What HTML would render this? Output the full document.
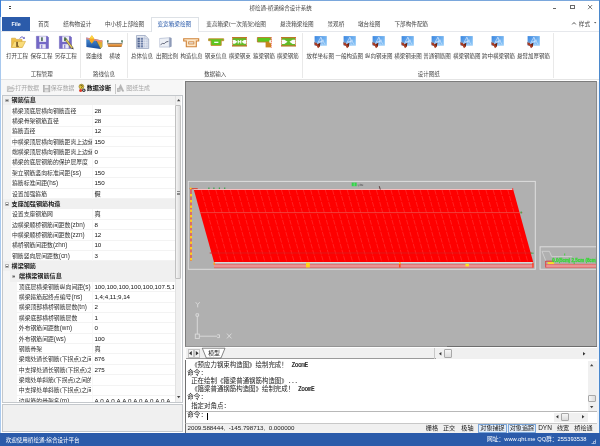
<!DOCTYPE html><html lang="zh-CN"><head><meta charset="utf-8"><title>桥绘通-桥涵综合设计系统</title><style>
html,body{margin:0;padding:0;}
body{width:600px;height:446px;position:relative;overflow:hidden;background:#fff;font-family:"Liberation Sans","Noto Sans CJK SC",sans-serif;}
.b{position:absolute;box-sizing:border-box;}
.t{position:absolute;white-space:nowrap;line-height:10px;height:10px;color:#333;}
#w{position:absolute;left:0;top:0;width:600px;height:446px;overflow:hidden;will-change:transform;}
.m{font-family:"Liberation Mono","Noto Sans CJK SC",monospace;}
svg{position:absolute;overflow:visible;}
</style></head><body><div id="w">
<div class="b" style="left:0px;top:0px;width:600px;height:1px;background:#7aa7dc;"></div>
<div class="b" style="left:0px;top:0px;width:1px;height:446px;background:#a9c9ee;"></div>
<div class="b" style="left:0px;top:0px;width:1px;height:17px;background:#3d7fd6;"></div>
<div class="b" style="left:598.5px;top:0px;width:1.5px;height:446px;background:#4b88cc;"></div>
<div class="b" style="left:597px;top:82px;width:1.5px;height:351px;background:#eef2f8;"></div>
<span class="t" style="left:280.7px;top:3.30px;font-size:5.5px;color:#444;transform:translateX(-50%);">桥绘通-桥涵综合设计系统</span>
<div class="b" style="left:9px;top:6.2px;width:2.2px;height:0.8px;background:#444;"></div>
<div class="b" style="left:9.3px;top:7.6px;width:1.6px;height:1.4px;background:#444;"></div>
<div class="b" style="left:553.4px;top:7.7px;width:3px;height:0.9px;background:#666;"></div>
<div class="b" style="left:570px;top:4.6px;width:4.8px;height:4.6px;border:0.7px solid #6a6a6a;border-top:1.4px solid #6a6a6a;"></div>
<svg style="left:587.6px;top:5px" width="4.2" height="4.2" viewBox="0 0 4.2 4.2"><path d="M0 0L4.2 4.2M4.2 0L0 4.2" stroke="#555" stroke-width="0.8" fill="none"/></svg>
<div class="b" style="left:2px;top:17px;width:28px;height:14.3px;background:#2b5baa;"></div>
<span class="t" style="left:16.1px;top:19.20px;font-size:5.4px;color:#f4f7fc;transform:translateX(-50%);font-weight:bold;">File</span>
<span class="t" style="left:38px;top:19.20px;font-size:5.6px;color:#444;">首页</span>
<span class="t" style="left:63.3px;top:19.20px;font-size:5.6px;color:#444;">结构物设计</span>
<span class="t" style="left:105px;top:19.20px;font-size:5.6px;color:#444;">中小桥上部绘图</span>
<span class="t" style="left:206.3px;top:19.20px;font-size:5.6px;color:#444;">变高箱梁(一次落架)绘图</span>
<span class="t" style="left:280px;top:19.20px;font-size:5.6px;color:#444;">悬浇箱梁绘图</span>
<span class="t" style="left:327.5px;top:19.20px;font-size:5.6px;color:#444;">景观桥</span>
<span class="t" style="left:358px;top:19.20px;font-size:5.6px;color:#444;">墩台绘图</span>
<span class="t" style="left:394.5px;top:19.20px;font-size:5.6px;color:#444;">下部构件配筋</span>
<div class="b" style="left:1px;top:31px;width:597.5px;height:48.5px;background:#fff;border-top:1px solid #e6e8ec;border-bottom:1px solid #e4e4e4;"></div>
<div class="b" style="left:151.3px;top:16.5px;width:47.5px;height:15.5px;background:#fff;border:1px solid #dde1e6;border-bottom:none;"></div>
<span class="t" style="left:157.5px;top:19.20px;font-size:5.6px;color:#2b5baa;">变宽箱梁绘图</span>
<svg style="left:572px;top:22.3px" width="4" height="2.6" viewBox="0 0 4 2.6"><path d="M0.2 2.4L2 0.5L3.8 2.4" stroke="#444" stroke-width="0.9" fill="none"/></svg>
<span class="t" style="left:578.8px;top:19.20px;font-size:5.6px;color:#444;">样式</span>
<svg style="left:593.8px;top:22px" width="2.4" height="1.6" viewBox="0 0 2.4 1.6"><path d="M0 0H2.4L1.2 1.6Z" fill="#555"/></svg>
<div class="b" style="left:80.3px;top:32.5px;width:0.8px;height:45.5px;background:#e9e9e9;"></div>
<div class="b" style="left:127.1px;top:32.5px;width:0.8px;height:45.5px;background:#e9e9e9;"></div>
<div class="b" style="left:302.1px;top:32.5px;width:0.8px;height:45.5px;background:#e9e9e9;"></div>
<div class="b" style="left:553.0px;top:32.5px;width:0.8px;height:45.5px;background:#e9e9e9;"></div>
<span class="t" style="left:17.0px;top:51.20px;font-size:5.5px;color:#444;transform:translateX(-50%);">打开工程</span>
<span class="t" style="left:41.625px;top:51.20px;font-size:5.5px;color:#444;transform:translateX(-50%);">保存工程</span>
<span class="t" style="left:65.875px;top:51.20px;font-size:5.5px;color:#444;transform:translateX(-50%);">另存工程</span>
<span class="t" style="left:94.125px;top:51.20px;font-size:5.5px;color:#444;transform:translateX(-50%);">竖曲线</span>
<span class="t" style="left:114.75px;top:51.20px;font-size:5.5px;color:#444;transform:translateX(-50%);">横坡</span>
<span class="t" style="left:142.0px;top:51.20px;font-size:5.5px;color:#444;transform:translateX(-50%);">总体信息</span>
<span class="t" style="left:167.0px;top:51.20px;font-size:5.5px;color:#444;transform:translateX(-50%);">出图比例</span>
<span class="t" style="left:191.625px;top:51.20px;font-size:5.5px;color:#444;transform:translateX(-50%);">构造信息</span>
<span class="t" style="left:215.875px;top:51.20px;font-size:5.5px;color:#444;transform:translateX(-50%);">钢束信息</span>
<span class="t" style="left:239.75px;top:51.20px;font-size:5.5px;color:#444;transform:translateX(-50%);">横梁钢束</span>
<span class="t" style="left:264.125px;top:51.20px;font-size:5.5px;color:#444;transform:translateX(-50%);">箍梁钢筋</span>
<span class="t" style="left:287.75px;top:51.20px;font-size:5.5px;color:#444;transform:translateX(-50%);">横梁钢筋</span>
<span class="t" style="left:320.375px;top:51.20px;font-size:5.5px;color:#444;transform:translateX(-50%);">放样坐标图</span>
<span class="t" style="left:349.375px;top:51.20px;font-size:5.5px;color:#444;transform:translateX(-50%);">一般构造图</span>
<span class="t" style="left:378.75px;top:51.20px;font-size:5.5px;color:#444;transform:translateX(-50%);">纵向钢束图</span>
<span class="t" style="left:408.125px;top:51.20px;font-size:5.5px;color:#444;transform:translateX(-50%);">横梁钢束图</span>
<span class="t" style="left:437.125px;top:51.20px;font-size:5.5px;color:#444;transform:translateX(-50%);">普通钢筋图</span>
<span class="t" style="left:466.875px;top:51.20px;font-size:5.5px;color:#444;transform:translateX(-50%);">横梁钢筋图</span>
<span class="t" style="left:498.5px;top:51.20px;font-size:5.5px;color:#444;transform:translateX(-50%);">跨中横梁钢筋</span>
<span class="t" style="left:533.5px;top:51.20px;font-size:5.5px;color:#444;transform:translateX(-50%);">悬臂加厚钢筋</span>
<span class="t" style="left:41.875px;top:68.80px;font-size:5.5px;color:#444;transform:translateX(-50%);">工程管理</span>
<span class="t" style="left:104.125px;top:68.80px;font-size:5.5px;color:#444;transform:translateX(-50%);">路线信息</span>
<span class="t" style="left:215.375px;top:68.80px;font-size:5.5px;color:#444;transform:translateX(-50%);">数据输入</span>
<span class="t" style="left:428.75px;top:68.80px;font-size:5.5px;color:#444;transform:translateX(-50%);">设计图纸</span>
<svg style="left:10.6px;top:36.2px" width="15" height="12" viewBox="0 0 15 12"><path d="M0.6 2.2H4.4L5.4 3.4H11V11.2H0.6Z" fill="#efc24a" stroke="#cf9f34" stroke-width="0.6"/><path d="M0.4 11.4L3.2 5.4H14.5L11.4 11.4Z" fill="#f9dc7a" stroke="#d6a838" stroke-width="0.6"/><rect x="5.3" y="5.9" width="1.5" height="5" fill="#6a4a1a"/><path d="M6.6 9.8h1.2v1.2h-1.2z" fill="#8a6a2a"/><path d="M8.8 2.6C9.6 0.6 11.8 0.4 12.8 2" stroke="#5c54b8" stroke-width="0.9" fill="none"/><path d="M11.6 2.4L13.8 3L13.6 0.8Z" fill="#5c54b8"/></svg>
<svg style="left:36px;top:36px" width="13" height="13.2" viewBox="0 0 13 13.2"><path d="M0.4 0.3H11.4L12.5 1.4V12.5H0.4Z" fill="#7468c6" stroke="#6a5eb8" stroke-width="0.5"/><rect x="3.2" y="0.3" width="6.9" height="5.6" fill="#eef0f8"/><rect x="5.2" y="1.3" width="1.5" height="3.8" fill="#3d5c4c"/><rect x="3.6" y="8.2" width="6.1" height="4.3" fill="#e9e9f5"/><rect x="5.2" y="8.8" width="1.1" height="3.6" fill="#7a6ecb"/></svg>
<svg style="left:59.2px;top:36px" width="16" height="14" viewBox="0 0 16 14"><path d="M0.4 0.3H11.4L12.5 1.4V12.5H0.4Z" fill="#7468c6" stroke="#6a5eb8" stroke-width="0.5"/><rect x="3.2" y="0.3" width="6.9" height="5.6" fill="#eef0f8"/><rect x="5.2" y="1.3" width="1.5" height="3.8" fill="#3d5c4c"/><rect x="3.6" y="8.2" width="6.1" height="4.3" fill="#e9e9f5"/><rect x="5.2" y="8.8" width="1.1" height="3.6" fill="#7a6ecb"/><path d="M5.4 3.2L7 2.2L14 11.6L12.6 12.6Z" fill="#e8d060" stroke="#6a5a30" stroke-width="0.6"/><path d="M5.4 3.2L7 2.2L7.8 3.4L6.2 4.4Z" fill="#3a7a4a"/><path d="M12.6 12.6L14 11.6L14.8 13.6Z" fill="#333"/></svg>
<svg style="left:86px;top:34.6px" width="17" height="14.4" viewBox="0 0 17 14.4"><defs><linearGradient id="vc" x1="0" y1="0" x2="0" y2="1"><stop offset="0" stop-color="#4f97dc"/><stop offset="1" stop-color="#174a9a"/></linearGradient><linearGradient id="vo" x1="0" y1="0" x2="0" y2="1"><stop offset="0" stop-color="#e89a2a"/><stop offset="1" stop-color="#d8c040"/></linearGradient></defs><path d="M0.2 2.4L16.3 5.4V11.4L14.4 13.9L0.4 12Z" fill="url(#vc)"/><path d="M9.6 4.6L16.3 5.4V11.6L14.6 13.8Z" fill="url(#vo)"/><path d="M9.4 4.4L14.6 13.8" stroke="#4a5a6a" stroke-width="0.6"/><path d="M0.2 2.4L16.3 5.4V7L0.2 4.2Z" fill="#f28a86" opacity="0.9"/><path d="M5.9 0.2L8.4 3.8L7.6 6.2L5.8 8.8L3.9 6.2L3.2 3.6Z" fill="#f6a81e"/><path d="M5.9 0.2L8 3.4H3.6Z" fill="#fbd84a"/></svg>
<svg style="left:107.2px;top:39.6px" width="16" height="7" viewBox="0 0 16 7"><rect x="0.1" y="0.2" width="1.4" height="2.5" fill="#3a6a4a"/><rect x="14.3" y="0.2" width="1.4" height="2.5" fill="#3a6a4a"/><rect x="0.8" y="2.5" width="14.2" height="0.9" fill="#e2ebea"/><rect x="0.3" y="3.4" width="15.2" height="0.8" fill="#5a3a1a"/><path d="M0.4 4.2H15.4L14.6 6.3H1.2Z" fill="#e28c30"/><path d="M1.1 6.1H14.7L14.5 6.8H1.3Z" fill="#9c5616"/></svg>
<svg style="left:135.8px;top:35px" width="13.2" height="14" viewBox="0 0 13.2 14"><path d="M0.5 0.5H9L12.7 4.2V13.5H0.5Z" fill="#e3e8f1" stroke="#9aa6c0" stroke-width="0.8"/><path d="M9 0.5V4.2H12.7Z" fill="#fafbfd" stroke="#9aa6c0" stroke-width="0.6"/><rect x="1.5" y="2.8" width="10.2" height="9.6" fill="#c4cde0"/><rect x="1.5" y="2.8" width="2.5" height="9.6" fill="#4f6390"/><rect x="4.5" y="2.8" width="2.8" height="9.6" fill="#6e80a8"/><path d="M1.5 5.1H11.7M1.5 7.5H11.7M1.5 9.9H11.7M4.25 2.8V12.4M7.5 2.8V12.4M9.7 4.4V12.4" stroke="#eef1f7" stroke-width="0.55"/></svg>
<svg style="left:159.2px;top:37.2px" width="12.8" height="10.8" viewBox="0 0 12.8 10.8"><path d="M0.3 1.1L10.4 0.2L12.5 1V9.4L10.4 10.5H0.3Z" fill="#c3cbdc"/><path d="M10.4 0.2L12.5 1V9.4L10.4 10.5Z" fill="#8e9bb8"/><path d="M1 2L9.8 1.3V9.6H1Z" fill="#edf0f6"/><path d="M1.5 7.8L3.6 6.4L5.2 6.7L7 5L9.4 4.4" stroke="#454a60" stroke-width="0.8" fill="none"/></svg>
<svg style="left:182.8px;top:37.8px" width="16.4" height="9.6" viewBox="0 0 16.4 9.6"><path d="M0.7 0.8H15.7V3H13.3V8.7H3.3V3H0.7Z" fill="#fde9cb" stroke="#cf8238" stroke-width="1.1"/><rect x="5.7" y="3.8" width="5.2" height="2.2" fill="#e8e4e0" stroke="#cf8238" stroke-width="0.8"/></svg>
<svg style="left:207.6px;top:38.2px" width="16.4" height="8.4" viewBox="0 0 16.4 8.4"><path d="M0.6 0.8H15.7V2.7H13.2V7.4H3V2.7H0.6Z" fill="#5cc620" stroke="#c98a30" stroke-width="0.9"/><rect x="6.2" y="3.7" width="4.2" height="1.3" fill="#f4fff0"/></svg>
<svg style="left:232.2px;top:37.4px" width="15" height="9.6" viewBox="0 0 15 9.6"><rect x="0.5" y="0.5" width="14" height="8.6" fill="#62bc26"/><path d="M0 0.7H15M0 8.9H15" stroke="#b87a28" stroke-width="1.3"/><path d="M0.5 0V9.6M14.5 0V9.6" stroke="#f0503c" stroke-width="0.7" stroke-dasharray="1.3 0.6"/><path d="M0.8 2.9H3L5.4 4.8L3 6.7H0.8Z M14.2 2.9H12L9.6 4.8L12 6.7H14.2Z" fill="#fbfdf8"/><path d="M6.2 3V6.6M8.8 3V6.6M6.2 4.8H8.8" stroke="#fff" stroke-width="1.1"/></svg>
<svg style="left:256.6px;top:37.2px" width="15" height="11" viewBox="0 0 15 11"><path d="M0.4 0.5H13.8V5H0.4Z" fill="#62c024" stroke="#b87a28" stroke-width="0.9"/><rect x="8.6" y="4.6" width="5.4" height="5.8" fill="#c8841e"/><rect x="1" y="1.1" width="11.4" height="3.2" fill="#5cc81e"/><ellipse cx="13.2" cy="4.6" rx="0.9" ry="1.8" fill="#f8fbf4"/><path d="M14.4 0V10.8" stroke="#f0503c" stroke-width="0.7" stroke-dasharray="1.3 0.6"/></svg>
<svg style="left:280.6px;top:37.4px" width="15" height="9.6" viewBox="0 0 15 9.6"><rect x="0.5" y="0.5" width="14" height="8.6" fill="#62bc26"/><path d="M0 0.7H15M0 8.9H15" stroke="#b87a28" stroke-width="1.3"/><path d="M0.5 0V9.6M14.5 0V9.6" stroke="#f0503c" stroke-width="0.7" stroke-dasharray="1.3 0.6"/><path d="M0.8 2.7H3.4L6.6 4.8L3.4 6.9H0.8Z M14.2 2.7H11.6L8.4 4.8L11.6 6.9H14.2Z" fill="#fbfdf8"/></svg>
<svg style="left:313.8px;top:36.4px" width="13" height="12.4" viewBox="0 0 13 12.4"><defs><linearGradient id="dg313" x1="0" y1="0" x2="1" y2="0.6"><stop offset="0" stop-color="#3a86e0"/><stop offset="1" stop-color="#86c2f6"/></linearGradient></defs><rect x="0.6" y="0.1" width="12.2" height="9.5" fill="url(#dg313)"/><path d="M0.6 9.1H12.8" stroke="#b8dcfa" stroke-width="0.8"/><path d="M2.8 8.6L6.8 1.2L10.8 8.2M4.4 5.8H9.6M6.8 1.2L8.2 8.8M3.6 7.4L10 4" stroke="#e4f0ff" stroke-width="0.65" fill="none" opacity="0.8"/><path d="M0.2 6.2L2.2 6.6L3.8 8.2L6.2 7L5.8 10.8L4 12.2L2.8 10L0.6 9Z" fill="#a83c24"/><path d="M0.2 6.4L1.8 5L3 7Z" fill="#8496b2"/><path d="M3.8 8.2L6.2 7L5.8 10.8Z" fill="#6a2414"/></svg>
<svg style="left:342.6px;top:36.4px" width="13" height="12.4" viewBox="0 0 13 12.4"><defs><linearGradient id="dg342" x1="0" y1="0" x2="1" y2="0.6"><stop offset="0" stop-color="#3a86e0"/><stop offset="1" stop-color="#86c2f6"/></linearGradient></defs><rect x="0.6" y="0.1" width="12.2" height="9.5" fill="url(#dg342)"/><path d="M0.6 9.1H12.8" stroke="#b8dcfa" stroke-width="0.8"/><path d="M2.8 8.6L6.8 1.2L10.8 8.2M4.4 5.8H9.6M6.8 1.2L8.2 8.8M3.6 7.4L10 4" stroke="#e4f0ff" stroke-width="0.65" fill="none" opacity="0.8"/><path d="M0.2 6.2L2.2 6.6L3.8 8.2L6.2 7L5.8 10.8L4 12.2L2.8 10L0.6 9Z" fill="#a83c24"/><path d="M0.2 6.4L1.8 5L3 7Z" fill="#8496b2"/><path d="M3.8 8.2L6.2 7L5.8 10.8Z" fill="#6a2414"/></svg>
<svg style="left:372px;top:36.4px" width="13" height="12.4" viewBox="0 0 13 12.4"><defs><linearGradient id="dg372" x1="0" y1="0" x2="1" y2="0.6"><stop offset="0" stop-color="#3a86e0"/><stop offset="1" stop-color="#86c2f6"/></linearGradient></defs><rect x="0.6" y="0.1" width="12.2" height="9.5" fill="url(#dg372)"/><path d="M0.6 9.1H12.8" stroke="#b8dcfa" stroke-width="0.8"/><path d="M2.8 8.6L6.8 1.2L10.8 8.2M4.4 5.8H9.6M6.8 1.2L8.2 8.8M3.6 7.4L10 4" stroke="#e4f0ff" stroke-width="0.65" fill="none" opacity="0.8"/><path d="M0.2 6.2L2.2 6.6L3.8 8.2L6.2 7L5.8 10.8L4 12.2L2.8 10L0.6 9Z" fill="#a83c24"/><path d="M0.2 6.4L1.8 5L3 7Z" fill="#8496b2"/><path d="M3.8 8.2L6.2 7L5.8 10.8Z" fill="#6a2414"/></svg>
<svg style="left:401.3px;top:36.4px" width="13" height="12.4" viewBox="0 0 13 12.4"><defs><linearGradient id="dg401" x1="0" y1="0" x2="1" y2="0.6"><stop offset="0" stop-color="#3a86e0"/><stop offset="1" stop-color="#86c2f6"/></linearGradient></defs><rect x="0.6" y="0.1" width="12.2" height="9.5" fill="url(#dg401)"/><path d="M0.6 9.1H12.8" stroke="#b8dcfa" stroke-width="0.8"/><path d="M2.8 8.6L6.8 1.2L10.8 8.2M4.4 5.8H9.6M6.8 1.2L8.2 8.8M3.6 7.4L10 4" stroke="#e4f0ff" stroke-width="0.65" fill="none" opacity="0.8"/><path d="M0.2 6.2L2.2 6.6L3.8 8.2L6.2 7L5.8 10.8L4 12.2L2.8 10L0.6 9Z" fill="#a83c24"/><path d="M0.2 6.4L1.8 5L3 7Z" fill="#8496b2"/><path d="M3.8 8.2L6.2 7L5.8 10.8Z" fill="#6a2414"/></svg>
<svg style="left:430.8px;top:36.4px" width="13" height="12.4" viewBox="0 0 13 12.4"><defs><linearGradient id="dg430" x1="0" y1="0" x2="1" y2="0.6"><stop offset="0" stop-color="#3a86e0"/><stop offset="1" stop-color="#86c2f6"/></linearGradient></defs><rect x="0.6" y="0.1" width="12.2" height="9.5" fill="url(#dg430)"/><path d="M0.6 9.1H12.8" stroke="#b8dcfa" stroke-width="0.8"/><path d="M2.8 8.6L6.8 1.2L10.8 8.2M4.4 5.8H9.6M6.8 1.2L8.2 8.8M3.6 7.4L10 4" stroke="#e4f0ff" stroke-width="0.65" fill="none" opacity="0.8"/><path d="M0.2 6.2L2.2 6.6L3.8 8.2L6.2 7L5.8 10.8L4 12.2L2.8 10L0.6 9Z" fill="#a83c24"/><path d="M0.2 6.4L1.8 5L3 7Z" fill="#8496b2"/><path d="M3.8 8.2L6.2 7L5.8 10.8Z" fill="#6a2414"/></svg>
<svg style="left:459.6px;top:36.4px" width="13" height="12.4" viewBox="0 0 13 12.4"><defs><linearGradient id="dg459" x1="0" y1="0" x2="1" y2="0.6"><stop offset="0" stop-color="#3a86e0"/><stop offset="1" stop-color="#86c2f6"/></linearGradient></defs><rect x="0.6" y="0.1" width="12.2" height="9.5" fill="url(#dg459)"/><path d="M0.6 9.1H12.8" stroke="#b8dcfa" stroke-width="0.8"/><path d="M2.8 8.6L6.8 1.2L10.8 8.2M4.4 5.8H9.6M6.8 1.2L8.2 8.8M3.6 7.4L10 4" stroke="#e4f0ff" stroke-width="0.65" fill="none" opacity="0.8"/><path d="M0.2 6.2L2.2 6.6L3.8 8.2L6.2 7L5.8 10.8L4 12.2L2.8 10L0.6 9Z" fill="#a83c24"/><path d="M0.2 6.4L1.8 5L3 7Z" fill="#8496b2"/><path d="M3.8 8.2L6.2 7L5.8 10.8Z" fill="#6a2414"/></svg>
<svg style="left:491.3px;top:36.4px" width="13" height="12.4" viewBox="0 0 13 12.4"><defs><linearGradient id="dg491" x1="0" y1="0" x2="1" y2="0.6"><stop offset="0" stop-color="#3a86e0"/><stop offset="1" stop-color="#86c2f6"/></linearGradient></defs><rect x="0.6" y="0.1" width="12.2" height="9.5" fill="url(#dg491)"/><path d="M0.6 9.1H12.8" stroke="#b8dcfa" stroke-width="0.8"/><path d="M2.8 8.6L6.8 1.2L10.8 8.2M4.4 5.8H9.6M6.8 1.2L8.2 8.8M3.6 7.4L10 4" stroke="#e4f0ff" stroke-width="0.65" fill="none" opacity="0.8"/><path d="M0.2 6.2L2.2 6.6L3.8 8.2L6.2 7L5.8 10.8L4 12.2L2.8 10L0.6 9Z" fill="#a83c24"/><path d="M0.2 6.4L1.8 5L3 7Z" fill="#8496b2"/><path d="M3.8 8.2L6.2 7L5.8 10.8Z" fill="#6a2414"/></svg>
<svg style="left:527px;top:36.4px" width="13" height="12.4" viewBox="0 0 13 12.4"><defs><linearGradient id="dg527" x1="0" y1="0" x2="1" y2="0.6"><stop offset="0" stop-color="#3a86e0"/><stop offset="1" stop-color="#86c2f6"/></linearGradient></defs><rect x="0.6" y="0.1" width="12.2" height="9.5" fill="url(#dg527)"/><path d="M0.6 9.1H12.8" stroke="#b8dcfa" stroke-width="0.8"/><path d="M2.8 8.6L6.8 1.2L10.8 8.2M4.4 5.8H9.6M6.8 1.2L8.2 8.8M3.6 7.4L10 4" stroke="#e4f0ff" stroke-width="0.65" fill="none" opacity="0.8"/><path d="M0.2 6.2L2.2 6.6L3.8 8.2L6.2 7L5.8 10.8L4 12.2L2.8 10L0.6 9Z" fill="#a83c24"/><path d="M0.2 6.4L1.8 5L3 7Z" fill="#8496b2"/><path d="M3.8 8.2L6.2 7L5.8 10.8Z" fill="#6a2414"/></svg>
<div class="b" style="left:1px;top:80px;width:184px;height:14.5px;background:#f7f7f7;"></div>
<span class="t" style="left:15.3px;top:83.30px;font-size:5.95px;color:#a8a8a8;">打开数据</span>
<span class="t" style="left:50.8px;top:83.30px;font-size:5.95px;color:#a8a8a8;">保存数据</span>
<span class="t" style="left:86.7px;top:83.30px;font-size:6.1px;color:#111;font-weight:bold;">数据诊断</span>
<div class="b" style="left:114.5px;top:83.5px;width:0.8px;height:10px;background:#c8c8c8;"></div>
<span class="t" style="left:126.25px;top:83.30px;font-size:5.95px;color:#a8a8a8;">图纸生成</span>
<svg style="left:6.6px;top:84.6px" width="8" height="7" viewBox="0 0 8 7"><path d="M0.4 1.4H2.6L3.2 2.2H6V6.4H0.4Z" fill="#d4d4d4" stroke="#a8a8a8" stroke-width="0.5"/><path d="M0.4 6.4L1.8 3.4H7.6L6 6.4Z" fill="#e6e6e6" stroke="#a8a8a8" stroke-width="0.5"/><path d="M5 1.2C5.6 0.2 6.8 0.2 7.4 1.2" stroke="#aaa" stroke-width="0.6" fill="none"/></svg>
<svg style="left:42.6px;top:84.6px" width="7.4" height="7.4" viewBox="0 0 7.4 7.4"><rect x="0.3" y="0.3" width="6.6" height="6.6" fill="#bdbdbd" stroke="#9a9a9a" stroke-width="0.5"/><rect x="1.8" y="0.4" width="3.6" height="2.6" fill="#f0f0f0"/><rect x="1.8" y="4.4" width="3.6" height="2.4" fill="#e0e0e0"/></svg>
<svg style="left:78.2px;top:84.2px" width="8" height="8.4" viewBox="0 0 8 8.4"><circle cx="3.4" cy="2.6" r="2.4" fill="#f4d23a" stroke="#7a6a1a" stroke-width="0.6"/><path d="M2.4 2.2C2.6 1 4.4 1 4.4 2.2C4.4 3 3.4 3 3.4 3.8" stroke="#222" stroke-width="0.7" fill="none"/><circle cx="2.6" cy="6.4" r="1.5" fill="#e03a2a"/><circle cx="5.8" cy="6.2" r="1.7" fill="#333"/><circle cx="5.8" cy="6.2" r="0.7" fill="#e8e8e8"/></svg>
<svg style="left:117.4px;top:84.4px" width="7.4" height="7.8" viewBox="0 0 7.4 7.8"><path d="M3.6 0.4L0.4 7.2H2L3.6 3.4L5.2 7.2H6.8Z" fill="#b8b8b8" stroke="#9c9c9c" stroke-width="0.4"/><rect x="0.2" y="4.6" width="3" height="2.8" fill="#c8c8c8" stroke="#a0a0a0" stroke-width="0.4"/></svg>
<div class="b" style="left:2px;top:94.5px;width:180.5px;height:308.0px;background:#fff;border:1px solid #c4c8cc;"></div>
<div class="b" style="left:3px;top:95.5px;width:171.7px;height:306.0px;overflow:hidden;">
<div class="b" style="left:0;top:0;width:7.5px;height:400px;background:#f5f5f5;"></div>
<div class="b" style="left:0px;top:-0.38px;width:200px;height:10.357px;background:#f0f0f0;"></div>
<div class="b" style="left:2.20px;top:3.00px;width:3.7px;height:3.7px;border:0.6px solid #b4b4b4;background:#fff;border-radius:0.8px;"></div>
<div class="b" style="left:3.00px;top:4.50px;width:2px;height:0.6px;background:#6a6a6a;"></div>
<span class="t" style="left:8.60px;top:-0.20px;font-size:6.1px;color:#222;font-weight:bold;">钢筋信息</span>
<div class="b" style="left:7.5px;top:19.74px;width:200px;height:0.7px;background:#f3f3f3;"></div>
<div class="b" style="left:89px;top:9.98px;width:0.6px;height:10.357px;background:#f8f8f8;"></div>
<span class="t" style="left:9.00px;top:10.16px;font-size:5.85px;color:#333;width:79.50px;overflow:hidden;">横梁顶底层横向钢筋直径</span>
<span class="t" style="left:91.40px;top:10.16px;font-size:6.2px;color:#111;width:79.30px;overflow:hidden;">28</span>
<div class="b" style="left:7.5px;top:30.09px;width:200px;height:0.7px;background:#f3f3f3;"></div>
<div class="b" style="left:89px;top:20.34px;width:0.6px;height:10.357px;background:#f8f8f8;"></div>
<span class="t" style="left:9.00px;top:20.51px;font-size:5.85px;color:#333;width:79.50px;overflow:hidden;">横梁骨架钢筋直径</span>
<span class="t" style="left:91.40px;top:20.51px;font-size:6.2px;color:#111;width:79.30px;overflow:hidden;">28</span>
<div class="b" style="left:7.5px;top:40.45px;width:200px;height:0.7px;background:#f3f3f3;"></div>
<div class="b" style="left:89px;top:30.69px;width:0.6px;height:10.357px;background:#f8f8f8;"></div>
<span class="t" style="left:9.00px;top:30.87px;font-size:5.85px;color:#333;width:79.50px;overflow:hidden;">箍筋直径</span>
<span class="t" style="left:91.40px;top:30.87px;font-size:6.2px;color:#111;width:79.30px;overflow:hidden;">12</span>
<div class="b" style="left:7.5px;top:50.81px;width:200px;height:0.7px;background:#f3f3f3;"></div>
<div class="b" style="left:89px;top:41.05px;width:0.6px;height:10.357px;background:#f8f8f8;"></div>
<span class="t" style="left:9.00px;top:41.23px;font-size:5.85px;color:#333;width:79.50px;overflow:hidden;">中横梁顶层横向钢筋距离上边缘</span>
<span class="t" style="left:91.40px;top:41.23px;font-size:6.2px;color:#111;width:79.30px;overflow:hidden;">150</span>
<div class="b" style="left:7.5px;top:61.16px;width:200px;height:0.7px;background:#f3f3f3;"></div>
<div class="b" style="left:89px;top:51.41px;width:0.6px;height:10.357px;background:#f8f8f8;"></div>
<span class="t" style="left:9.00px;top:51.58px;font-size:5.85px;color:#333;width:79.50px;overflow:hidden;">端横梁顶层横向钢筋距离上边缘</span>
<span class="t" style="left:91.40px;top:51.58px;font-size:6.2px;color:#111;width:79.30px;overflow:hidden;">0</span>
<div class="b" style="left:7.5px;top:71.52px;width:200px;height:0.7px;background:#f3f3f3;"></div>
<div class="b" style="left:89px;top:61.76px;width:0.6px;height:10.357px;background:#f8f8f8;"></div>
<span class="t" style="left:9.00px;top:61.94px;font-size:5.85px;color:#333;width:79.50px;overflow:hidden;">横梁的底层钢筋的保护层厚度</span>
<span class="t" style="left:91.40px;top:61.94px;font-size:6.2px;color:#111;width:79.30px;overflow:hidden;">0</span>
<div class="b" style="left:7.5px;top:81.88px;width:200px;height:0.7px;background:#f3f3f3;"></div>
<div class="b" style="left:89px;top:72.12px;width:0.6px;height:10.357px;background:#f8f8f8;"></div>
<span class="t" style="left:9.00px;top:72.30px;font-size:5.85px;color:#333;width:79.50px;overflow:hidden;">架立钢筋竖向标准间距<span style="font-size:6.4px">(ss)</span></span>
<span class="t" style="left:91.40px;top:72.30px;font-size:6.2px;color:#111;width:79.30px;overflow:hidden;">150</span>
<div class="b" style="left:7.5px;top:92.23px;width:200px;height:0.7px;background:#f3f3f3;"></div>
<div class="b" style="left:89px;top:82.48px;width:0.6px;height:10.357px;background:#f8f8f8;"></div>
<span class="t" style="left:9.00px;top:82.66px;font-size:5.85px;color:#333;width:79.50px;overflow:hidden;">箍筋标准间距<span style="font-size:6.4px">(hs)</span></span>
<span class="t" style="left:91.40px;top:82.66px;font-size:6.2px;color:#111;width:79.30px;overflow:hidden;">150</span>
<div class="b" style="left:7.5px;top:102.59px;width:200px;height:0.7px;background:#f3f3f3;"></div>
<div class="b" style="left:89px;top:92.83px;width:0.6px;height:10.357px;background:#f8f8f8;"></div>
<span class="t" style="left:9.00px;top:93.01px;font-size:5.85px;color:#333;width:79.50px;overflow:hidden;">设置加强箍筋</span>
<span class="t" style="left:91.40px;top:93.01px;font-size:6.2px;color:#111;width:79.30px;overflow:hidden;">假</span>
<div class="b" style="left:0px;top:103.19px;width:200px;height:10.357px;background:#f0f0f0;"></div>
<div class="b" style="left:2.20px;top:106.57px;width:3.7px;height:3.7px;border:0.6px solid #b4b4b4;background:#fff;border-radius:0.8px;"></div>
<div class="b" style="left:3.00px;top:108.07px;width:2px;height:0.6px;background:#6a6a6a;"></div>
<span class="t" style="left:8.60px;top:103.37px;font-size:6.1px;color:#222;font-weight:bold;">支座加强钢筋构造</span>
<div class="b" style="left:7.5px;top:123.31px;width:200px;height:0.7px;background:#f3f3f3;"></div>
<div class="b" style="left:89px;top:113.55px;width:0.6px;height:10.357px;background:#f8f8f8;"></div>
<span class="t" style="left:9.00px;top:113.73px;font-size:5.85px;color:#333;width:79.50px;overflow:hidden;">设置支座钢筋网</span>
<span class="t" style="left:91.40px;top:113.73px;font-size:6.2px;color:#111;width:79.30px;overflow:hidden;">真</span>
<div class="b" style="left:7.5px;top:133.66px;width:200px;height:0.7px;background:#f3f3f3;"></div>
<div class="b" style="left:89px;top:123.91px;width:0.6px;height:10.357px;background:#f8f8f8;"></div>
<span class="t" style="left:9.00px;top:124.08px;font-size:5.85px;color:#333;width:79.50px;overflow:hidden;">边横梁顺桥钢筋间距数<span style="font-size:6.4px">(zbn)</span></span>
<span class="t" style="left:91.40px;top:124.08px;font-size:6.2px;color:#111;width:79.30px;overflow:hidden;">8</span>
<div class="b" style="left:7.5px;top:144.02px;width:200px;height:0.7px;background:#f3f3f3;"></div>
<div class="b" style="left:89px;top:134.26px;width:0.6px;height:10.357px;background:#f8f8f8;"></div>
<span class="t" style="left:9.00px;top:134.44px;font-size:5.85px;color:#333;width:79.50px;overflow:hidden;">中横梁顺桥钢筋间距数<span style="font-size:6.4px">(zzn)</span></span>
<span class="t" style="left:91.40px;top:134.44px;font-size:6.2px;color:#111;width:79.30px;overflow:hidden;">12</span>
<div class="b" style="left:7.5px;top:154.38px;width:200px;height:0.7px;background:#f3f3f3;"></div>
<div class="b" style="left:89px;top:144.62px;width:0.6px;height:10.357px;background:#f8f8f8;"></div>
<span class="t" style="left:9.00px;top:144.80px;font-size:5.85px;color:#333;width:79.50px;overflow:hidden;">横桥钢筋间距数<span style="font-size:6.4px">(zhn)</span></span>
<span class="t" style="left:91.40px;top:144.80px;font-size:6.2px;color:#111;width:79.30px;overflow:hidden;">10</span>
<div class="b" style="left:7.5px;top:164.73px;width:200px;height:0.7px;background:#f3f3f3;"></div>
<div class="b" style="left:89px;top:154.98px;width:0.6px;height:10.357px;background:#f8f8f8;"></div>
<span class="t" style="left:9.00px;top:155.15px;font-size:5.85px;color:#333;width:79.50px;overflow:hidden;">钢筋竖向层间距数<span style="font-size:6.4px">(cn)</span></span>
<span class="t" style="left:91.40px;top:155.15px;font-size:6.2px;color:#111;width:79.30px;overflow:hidden;">3</span>
<div class="b" style="left:0px;top:165.33px;width:200px;height:10.357px;background:#f0f0f0;"></div>
<div class="b" style="left:2.20px;top:168.71px;width:3.7px;height:3.7px;border:0.6px solid #b4b4b4;background:#fff;border-radius:0.8px;"></div>
<div class="b" style="left:3.00px;top:170.21px;width:2px;height:0.6px;background:#6a6a6a;"></div>
<span class="t" style="left:8.60px;top:165.51px;font-size:6.1px;color:#222;font-weight:bold;">横梁钢筋</span>
<div class="b" style="left:6.5px;top:175.69px;width:200px;height:10.357px;background:#f0f0f0;"></div>
<div class="b" style="left:8.70px;top:179.07px;width:3.7px;height:3.7px;border:0.6px solid #b4b4b4;background:#fff;border-radius:0.8px;"></div>
<div class="b" style="left:9.50px;top:180.57px;width:2px;height:0.6px;background:#6a6a6a;"></div>
<span class="t" style="left:16.10px;top:175.87px;font-size:6.1px;color:#222;font-weight:bold;">端横梁钢筋信息</span>
<div class="b" style="left:7.5px;top:186.05px;width:6.8px;height:10.66px;background:#f5f5f5;"></div>
<div class="b" style="left:14.3px;top:195.80px;width:200px;height:0.7px;background:#f3f3f3;"></div>
<div class="b" style="left:89px;top:186.05px;width:0.6px;height:10.357px;background:#f8f8f8;"></div>
<span class="t" style="left:15.80px;top:186.23px;font-size:5.85px;color:#333;width:72.70px;overflow:hidden;">顶底层横梁钢筋纵向间距<span style="font-size:6.4px">(s)</span></span>
<span class="t" style="left:91.40px;top:186.23px;font-size:6.2px;color:#111;width:79.30px;overflow:hidden;">100,100,100,100,100,107.5,107.5</span>
<div class="b" style="left:7.5px;top:196.40px;width:6.8px;height:10.66px;background:#f5f5f5;"></div>
<div class="b" style="left:14.3px;top:206.16px;width:200px;height:0.7px;background:#f3f3f3;"></div>
<div class="b" style="left:89px;top:196.40px;width:0.6px;height:10.357px;background:#f8f8f8;"></div>
<span class="t" style="left:15.80px;top:196.58px;font-size:5.85px;color:#333;width:72.70px;overflow:hidden;">横梁箍筋起终点编号<span style="font-size:6.4px">(ns)</span></span>
<span class="t" style="left:91.40px;top:196.58px;font-size:6.2px;color:#111;width:79.30px;overflow:hidden;">1,4;4,11;9,14</span>
<div class="b" style="left:7.5px;top:206.76px;width:6.8px;height:10.66px;background:#f5f5f5;"></div>
<div class="b" style="left:14.3px;top:216.52px;width:200px;height:0.7px;background:#f3f3f3;"></div>
<div class="b" style="left:89px;top:206.76px;width:0.6px;height:10.357px;background:#f8f8f8;"></div>
<span class="t" style="left:15.80px;top:206.94px;font-size:5.85px;color:#333;width:72.70px;overflow:hidden;">横梁顶部横桥钢筋层数<span style="font-size:6.4px">(tn)</span></span>
<span class="t" style="left:91.40px;top:206.94px;font-size:6.2px;color:#111;width:79.30px;overflow:hidden;">2</span>
<div class="b" style="left:7.5px;top:217.12px;width:6.8px;height:10.66px;background:#f5f5f5;"></div>
<div class="b" style="left:14.3px;top:226.88px;width:200px;height:0.7px;background:#f3f3f3;"></div>
<div class="b" style="left:89px;top:217.12px;width:0.6px;height:10.357px;background:#f8f8f8;"></div>
<span class="t" style="left:15.80px;top:217.30px;font-size:5.85px;color:#333;width:72.70px;overflow:hidden;">横梁底部横桥钢筋层数</span>
<span class="t" style="left:91.40px;top:217.30px;font-size:6.2px;color:#111;width:79.30px;overflow:hidden;">1</span>
<div class="b" style="left:7.5px;top:227.48px;width:6.8px;height:10.66px;background:#f5f5f5;"></div>
<div class="b" style="left:14.3px;top:237.23px;width:200px;height:0.7px;background:#f3f3f3;"></div>
<div class="b" style="left:89px;top:227.48px;width:0.6px;height:10.357px;background:#f8f8f8;"></div>
<span class="t" style="left:15.80px;top:227.65px;font-size:5.85px;color:#333;width:72.70px;overflow:hidden;">外布钢筋间距数<span style="font-size:6.4px">(wn)</span></span>
<span class="t" style="left:91.40px;top:227.65px;font-size:6.2px;color:#111;width:79.30px;overflow:hidden;">0</span>
<div class="b" style="left:7.5px;top:237.83px;width:6.8px;height:10.66px;background:#f5f5f5;"></div>
<div class="b" style="left:14.3px;top:247.59px;width:200px;height:0.7px;background:#f3f3f3;"></div>
<div class="b" style="left:89px;top:237.83px;width:0.6px;height:10.357px;background:#f8f8f8;"></div>
<span class="t" style="left:15.80px;top:238.01px;font-size:5.85px;color:#333;width:72.70px;overflow:hidden;">外布钢筋间距<span style="font-size:6.4px">(ws)</span></span>
<span class="t" style="left:91.40px;top:238.01px;font-size:6.2px;color:#111;width:79.30px;overflow:hidden;">100</span>
<div class="b" style="left:7.5px;top:248.19px;width:6.8px;height:10.66px;background:#f5f5f5;"></div>
<div class="b" style="left:14.3px;top:257.95px;width:200px;height:0.7px;background:#f3f3f3;"></div>
<div class="b" style="left:89px;top:248.19px;width:0.6px;height:10.357px;background:#f8f8f8;"></div>
<span class="t" style="left:15.80px;top:248.37px;font-size:5.85px;color:#333;width:72.70px;overflow:hidden;">钢筋骨架</span>
<span class="t" style="left:91.40px;top:248.37px;font-size:6.2px;color:#111;width:79.30px;overflow:hidden;">真</span>
<div class="b" style="left:7.5px;top:258.55px;width:6.8px;height:10.66px;background:#f5f5f5;"></div>
<div class="b" style="left:14.3px;top:268.30px;width:200px;height:0.7px;background:#f3f3f3;"></div>
<div class="b" style="left:89px;top:258.55px;width:0.6px;height:10.357px;background:#f8f8f8;"></div>
<span class="t" style="left:15.80px;top:258.72px;font-size:5.85px;color:#333;width:72.70px;overflow:hidden;">梁端处通长钢筋(下拐点)之间的距离</span>
<span class="t" style="left:91.40px;top:258.72px;font-size:6.2px;color:#111;width:79.30px;overflow:hidden;">876</span>
<div class="b" style="left:7.5px;top:268.90px;width:6.8px;height:10.66px;background:#f5f5f5;"></div>
<div class="b" style="left:14.3px;top:278.66px;width:200px;height:0.7px;background:#f3f3f3;"></div>
<div class="b" style="left:89px;top:268.90px;width:0.6px;height:10.357px;background:#f8f8f8;"></div>
<span class="t" style="left:15.80px;top:269.08px;font-size:5.85px;color:#333;width:72.70px;overflow:hidden;">中支撑处通长钢筋(下拐点)之间的距离</span>
<span class="t" style="left:91.40px;top:269.08px;font-size:6.2px;color:#111;width:79.30px;overflow:hidden;">275</span>
<div class="b" style="left:7.5px;top:279.26px;width:6.8px;height:10.66px;background:#f5f5f5;"></div>
<div class="b" style="left:14.3px;top:289.02px;width:200px;height:0.7px;background:#f3f3f3;"></div>
<div class="b" style="left:89px;top:279.26px;width:0.6px;height:10.357px;background:#f8f8f8;"></div>
<span class="t" style="left:15.80px;top:279.44px;font-size:5.85px;color:#333;width:72.70px;overflow:hidden;">梁端处单斜筋(下拐点)之间的距离</span>
<div class="b" style="left:7.5px;top:289.62px;width:6.8px;height:10.66px;background:#f5f5f5;"></div>
<div class="b" style="left:14.3px;top:299.37px;width:200px;height:0.7px;background:#f3f3f3;"></div>
<div class="b" style="left:89px;top:289.62px;width:0.6px;height:10.357px;background:#f8f8f8;"></div>
<span class="t" style="left:15.80px;top:289.80px;font-size:5.85px;color:#333;width:72.70px;overflow:hidden;">中支撑处单斜筋(下拐点)之间的距离</span>
<div class="b" style="left:7.5px;top:299.97px;width:6.8px;height:10.66px;background:#f5f5f5;"></div>
<div class="b" style="left:14.3px;top:309.73px;width:200px;height:0.7px;background:#f3f3f3;"></div>
<div class="b" style="left:89px;top:299.97px;width:0.6px;height:10.357px;background:#f8f8f8;"></div>
<span class="t" style="left:15.80px;top:300.15px;font-size:5.85px;color:#333;width:72.70px;overflow:hidden;">边纵筋的骨架名<span style="font-size:6.4px">(m)</span></span>
<span class="t" style="left:91.40px;top:300.15px;font-size:6.2px;color:#111;width:79.30px;overflow:hidden;">A,0,A,0,A,A,0,A,0,A,0,A,0,A</span>
</div>
<div class="b" style="left:174.7px;top:95.5px;width:6.800000000000011px;height:306.0px;background:#f0f0f0;border-left:0.6px solid #e2e2e2;"></div>
<div class="b" style="left:175.2px;top:105px;width:5.800000000000011px;height:174px;background:linear-gradient(90deg,#f4f4f4,#dcdcdc);border:0.6px solid #c0c0c0;border-radius:1px;"></div>
<div class="b" style="left:177.0px;top:191.4px;width:3px;height:0.5px;background:#888;"></div>
<div class="b" style="left:177.0px;top:192.6px;width:3px;height:0.5px;background:#888;"></div>
<div class="b" style="left:177.0px;top:193.79999999999998px;width:3px;height:0.5px;background:#888;"></div>
<svg style="left:176.79999999999998px;top:99px" width="3.4" height="2.2" viewBox="0 0 3.4 2.2"><path d="M0 2.2H3.4L1.7 0Z" fill="#444"/></svg>
<svg style="left:176.79999999999998px;top:396.3px" width="3.4" height="2.2" viewBox="0 0 3.4 2.2"><path d="M0 0H3.4L1.7 2.2Z" fill="#444"/></svg>
<div class="b" style="left:2px;top:404px;width:180.5px;height:28px;background:#f0f0f0;border:1px solid #c4c8cc;"></div>
<div class="b" style="left:183px;top:80px;width:2.5px;height:353px;background:#fbfbfb;"></div>
<div class="b" style="left:185.3px;top:81px;width:411.3px;height:266.3px;background:#b0b0b0;border:1px solid #7c7c7c;border-right-color:#8a8a8a;border-bottom-color:#949494;"></div>
<div class="b" style="left:447px;top:346px;width:149.5px;height:1.1px;background:#6e6e6e;"></div>
<svg style="left:186.3px;top:82px;overflow:hidden" width="409.7" height="264.3" viewBox="186.3 82 409.7 264.3">
<defs><clipPath id="pc"><path d="M194.2 190L513.5 189.6L533.5 262L214.3 262Z"/></clipPath></defs>
<rect x="188.6" y="181.4" width="347" height="87.9" fill="none" stroke="#dedede" stroke-width="1"/>
<rect x="540.4" y="246.8" width="70" height="22.5" fill="none" stroke="#dedede" stroke-width="1"/>
<path d="M194.2 190L513.5 189.6L533.5 262L214.3 262Z" fill="#fe0000"/>
<g clip-path="url(#pc)" stroke="#ff7070" stroke-width="0.8" stroke-dasharray="5 1.2" opacity="0.38">
<path d="M201.5 190L221.5 262"/>
<path d="M208.8 190L228.8 262"/>
<path d="M216.1 190L236.1 262"/>
<path d="M223.4 190L243.4 262"/>
<path d="M230.7 190L250.7 262"/>
<path d="M238.0 190L258.0 262"/>
<path d="M245.3 190L265.3 262"/>
<path d="M252.6 190L272.6 262"/>
<path d="M259.9 190L279.9 262"/>
<path d="M267.2 190L287.2 262"/>
<path d="M274.5 190L294.5 262"/>
<path d="M281.8 190L301.8 262"/>
<path d="M289.1 190L309.1 262"/>
<path d="M296.4 190L316.4 262"/>
<path d="M303.7 190L323.7 262"/>
<path d="M311.0 190L331.0 262"/>
<path d="M318.3 190L338.3 262"/>
<path d="M325.6 190L345.6 262"/>
<path d="M332.9 190L352.9 262"/>
<path d="M340.2 190L360.2 262"/>
<path d="M347.5 190L367.5 262"/>
<path d="M354.8 190L374.8 262"/>
<path d="M362.1 190L382.1 262"/>
<path d="M369.4 190L389.4 262"/>
<path d="M376.7 190L396.7 262"/>
<path d="M384.0 190L404.0 262"/>
<path d="M391.3 190L411.3 262"/>
<path d="M398.6 190L418.6 262"/>
<path d="M405.9 190L425.9 262"/>
<path d="M413.2 190L433.2 262"/>
<path d="M420.5 190L440.5 262"/>
<path d="M427.8 190L447.8 262"/>
<path d="M435.1 190L455.1 262"/>
<path d="M442.4 190L462.4 262"/>
<path d="M449.7 190L469.7 262"/>
<path d="M457.0 190L477.0 262"/>
<path d="M464.3 190L484.3 262"/>
<path d="M471.6 190L491.6 262"/>
<path d="M478.9 190L498.9 262"/>
<path d="M486.2 190L506.2 262"/>
<path d="M493.5 190L513.5 262"/>
<path d="M500.8 190L520.8 262"/>
<path d="M508.1 190L528.1 262"/>
<path d="M515.4 190L535.4 262"/>
</g>
<path d="M200 212.6H523" stroke="#ea5a55" stroke-width="0.7"/>
<path d="M521.5 211.6v2" stroke="#30b040" stroke-width="1.2"/>
<path d="M210 253H532" stroke="#d82020" stroke-width="0.8"/>
<path d="M531 253.2h3" stroke="#30b040" stroke-width="0.8"/>
<path d="M194 189.5H513.5" stroke="#f8c0c0" stroke-width="1"/>
<path d="M513 188.2v2" stroke="#ff3030" stroke-width="1"/>
<path d="M191.3 188.5V261" stroke="#ff2a2a" stroke-width="1"/>
<rect x="190.4" y="194" width="1.9" height="2.4" fill="#ffd21a"/>
<rect x="190.4" y="200" width="1.9" height="2.4" fill="#ffd21a"/>
<rect x="190.4" y="205.5" width="1.9" height="2.4" fill="#ffd21a"/>
<rect x="190.4" y="209.5" width="1.9" height="2.4" fill="#ffd21a"/>
<rect x="190.4" y="215" width="1.9" height="2.4" fill="#ffd21a"/>
<rect x="190.4" y="219.5" width="1.9" height="2.4" fill="#ffd21a"/>
<rect x="190.4" y="225.5" width="1.9" height="2.4" fill="#ffd21a"/>
<rect x="190.4" y="230.5" width="1.9" height="2.4" fill="#ffd21a"/>
<rect x="190.4" y="236" width="1.9" height="2.4" fill="#ffd21a"/>
<rect x="190.4" y="241.5" width="1.9" height="2.4" fill="#ffd21a"/>
<rect x="190.4" y="247" width="1.9" height="2.4" fill="#ffd21a"/>
<rect x="190.4" y="252.5" width="1.9" height="2.4" fill="#ffd21a"/>
<rect x="190.4" y="258" width="1.9" height="2.4" fill="#ffd21a"/>
<path d="M190 188.6h8" stroke="#e03a2a" stroke-width="0.9"/>
<rect x="190.2" y="187.6" width="1.6" height="1.6" fill="#ffd21a"/>
<rect x="208.6" y="187.5" width="1.2" height="1.5" fill="#3aa04e"/>
<rect x="213.6" y="187.5" width="1.2" height="1.5" fill="#3aa04e"/>
<rect x="219.1" y="187.5" width="1.2" height="1.5" fill="#3aa04e"/>
<rect x="224.4" y="187.5" width="1.2" height="1.5" fill="#3aa04e"/>
<rect x="352" y="182.6" width="5" height="3.6" fill="#35d24a"/>
<path d="M354.5 182.6v3.6" stroke="#b0e8b0" stroke-width="0.5"/>
<path d="M358.4 184.2v1.8h1M360.2 186v-1.8l0.8 0 0 1.8M361.8 186v-1.8l1.2 1.8v-1.8" stroke="#555" stroke-width="0.4" fill="none"/>
<path d="M379.6 186.2L380.6 189.6" stroke="#503030" stroke-width="0.9"/>
<path d="M214 262.7H533.6" stroke="#dcd8d8" stroke-width="1.3"/>
<rect x="214.3" y="264.2" width="319.4" height="3.5" fill="#e99393"/>
<path d="M214.3 264.3H533.7M214.3 267.7H533.7" stroke="#e25050" stroke-width="0.6"/>
<rect x="213.8" y="262.3" width="1.6" height="2.6" fill="#ff9a20"/>
<rect x="306.3" y="262.6" width="3.8" height="4.8" fill="#ffd21a"/>
<rect x="399.3" y="262.6" width="1.6" height="5" fill="#ff4a20"/>
<rect x="399.3" y="262.6" width="1.6" height="1.5" fill="#ffd21a"/>
<rect x="465.8" y="263.8" width="3.4" height="2.6" fill="#ffe21a"/>
<rect x="532.6" y="262.6" width="1.3" height="5" fill="#ff3a20"/>
<rect x="546" y="264.2" width="60" height="3.5" fill="#e99393"/>
<path d="M546 264.3H606M546 267.7H606" stroke="#e25050" stroke-width="0.6"/>
<path d="M546 261.2H554.5" stroke="#e03030" stroke-width="0.9"/>
<path d="M546 261v6.5" stroke="#e03030" stroke-width="0.8"/>
<rect x="548" y="262.2" width="6.5" height="1.7" fill="#ffe21a"/>
<path d="M542.3 251.3L546 260.6 M542.3 251.3H549.7L552 256.6H572.5" stroke="#d4d4d4" stroke-width="0.8" fill="none"/>
<text x="552.6" y="261.6" font-size="5" fill="#3ad63a" stroke="#3ad63a" stroke-width="0.35" font-weight="bold" font-family="Liberation Sans, sans-serif" textLength="45" lengthAdjust="spacingAndGlyphs">0.0(5cm) 2.5cm (8cm)</text>
<path d="M565 253.5v2 M574.5 262.5v1.6" stroke="#32d232" stroke-width="0.9"/>
<g stroke="#dcdcdc" stroke-width="0.9" fill="none">
<rect x="195.6" y="334.1" width="4" height="4.3"/>
<path d="M197.6 334.1V316 M196.3 316.2h2.6v-2.4h-2.6z M199.6 336.2H217.5 M217.5 334.8h2.3v2.8h-2.3"/>
<path d="M227.3 333.6L231.8 338.4M231.8 333.6L227.3 338.4"/>
<path d="M196 302.2L198 304.6L200 302.2M198 304.6V307.4"/>
</g>
</svg>
<div class="b" style="left:186.3px;top:348.3px;width:410.7px;height:11px;background:#f0f0f0;border-bottom:1px solid #9a9a9a;"></div>
<div class="b" style="left:187.6px;top:349px;width:6px;height:8.6px;background:#f4f4f4;border:0.6px solid #c4c4c4;"></div>
<div class="b" style="left:194px;top:349px;width:6px;height:8.6px;background:#f4f4f4;border:0.6px solid #c4c4c4;"></div>
<svg style="left:189.4px;top:351px" width="10" height="4.6" viewBox="0 0 10 4.6"><path d="M2.8 0V4.6L0 2.3Z M6.8 0V4.6L9.6 2.3Z" fill="#333"/></svg>
<svg style="left:201px;top:348.3px" width="30" height="11" viewBox="0 0 30 11"><path d="M1.3 0.2L5.3 10H20L24 0.2Z" fill="#fff" stroke="#555" stroke-width="0.7"/></svg>
<span class="t" style="left:208.2px;top:348.00px;font-size:5.9px;color:#222;">模型</span>
<div class="b" style="left:434.3px;top:348.3px;width:1.2px;height:10.5px;background:#c8c8c8;"></div>
<div class="b" style="left:436px;top:348.3px;width:160.5px;height:10.4px;background:#f0f0f0;"></div>
<div class="b" style="left:444.2px;top:349px;width:8px;height:9px;background:linear-gradient(#f6f6f6,#dcdcdc);border:0.6px solid #a8a8a8;border-radius:1px;"></div>
<svg style="left:439px;top:351.5px" width="2.4" height="3.6" viewBox="0 0 2.4 3.6"><path d="M2.4 0V3.6L0 1.8Z" fill="#333"/></svg>
<svg style="left:582.6px;top:351.5px" width="2.4" height="3.6" viewBox="0 0 2.4 3.6"><path d="M0 0V3.6L2.4 1.8Z" fill="#333"/></svg>
<div class="b" style="left:185.3px;top:359.6px;width:411.7px;height:63.6px;background:#fff;border-left:1px solid #707070;"></div>
<span class="t m" style="left:187.3px;top:360.60px;font-size:6.45px;color:#222;">&nbsp;《预应力钢束构造图》绘制完成！&nbsp;<span style="font-size:6.3px;letter-spacing:-0.55px;font-weight:bold;color:#333">ZoomE</span></span>
<span class="t m" style="left:187.3px;top:368.82px;font-size:6.45px;color:#222;">命令:</span>
<span class="t m" style="left:187.3px;top:377.04px;font-size:6.45px;color:#222;">&nbsp;正在绘制《箍梁普通钢筋构造图》<span style="letter-spacing:-0.6px">...</span></span>
<span class="t m" style="left:187.3px;top:385.26px;font-size:6.45px;color:#222;">&nbsp;《箍梁普通钢筋构造图》绘制完成！&nbsp;<span style="font-size:6.3px;letter-spacing:-0.55px;font-weight:bold;color:#333">ZoomE</span></span>
<span class="t m" style="left:187.3px;top:393.48px;font-size:6.45px;color:#222;">命令:</span>
<span class="t m" style="left:187.3px;top:401.70px;font-size:6.45px;color:#222;">&nbsp;指定对角点:</span>
<div class="b" style="left:587.5px;top:360.5px;width:9.2px;height:50.5px;background:#f0f0f0;"></div>
<div class="b" style="left:588.2px;top:395.3px;width:7.8px;height:7px;background:linear-gradient(90deg,#f6f6f6,#dcdcdc);border:0.6px solid #a8a8a8;border-radius:1px;"></div>
<svg style="left:590.3px;top:364px" width="3.4" height="2.2" viewBox="0 0 3.4 2.2"><path d="M0 2.2H3.4L1.7 0Z" fill="#444"/></svg>
<svg style="left:590.3px;top:406px" width="3.4" height="2.2" viewBox="0 0 3.4 2.2"><path d="M0 0H3.4L1.7 2.2Z" fill="#444"/></svg>
<div class="b" style="left:186.3px;top:411.2px;width:410.7px;height:0.9px;background:#b8b8b8;"></div>
<span class="t m" style="left:187.3px;top:411.40px;font-size:6.45px;color:#222;">命令: </span>
<div class="b" style="left:207.2px;top:412.8px;width:0.8px;height:7px;background:#000;"></div>
<div class="b" style="left:554px;top:412.6px;width:33.5px;height:9px;background:#f0f0f0;"></div>
<div class="b" style="left:560.8px;top:413.2px;width:8px;height:7.8px;background:linear-gradient(#f6f6f6,#dcdcdc);border:0.6px solid #a8a8a8;border-radius:1px;"></div>
<svg style="left:555.8px;top:415.2px" width="2.4" height="3.6" viewBox="0 0 2.4 3.6"><path d="M2.4 0V3.6L0 1.8Z" fill="#333"/></svg>
<svg style="left:582.2px;top:415.2px" width="2.4" height="3.6" viewBox="0 0 2.4 3.6"><path d="M0 0V3.6L2.4 1.8Z" fill="#333"/></svg>
<div class="b" style="left:185.3px;top:422.6px;width:411.7px;height:10.6px;background:#f0f0f0;border-top:0.8px solid #c8c8c8;border-left:1px solid #707070;"></div>
<span class="t" style="left:187.5px;top:423.40px;font-size:6.2px;color:#222;">2009.588444,&nbsp; -145.798713,&nbsp; 0.000000</span>
<div class="b" style="left:478.3px;top:424px;width:28.4px;height:8.8px;background:#e3edf9;border:0.7px solid #7aa6da;"></div>
<div class="b" style="left:507.5px;top:424px;width:28.8px;height:8.8px;background:#e3edf9;border:0.7px solid #7aa6da;"></div>
<span class="t" style="left:431.9px;top:423.40px;font-size:6.1px;color:#222;transform:translateX(-50%);">栅格</span>
<span class="t" style="left:449.1px;top:423.40px;font-size:6.1px;color:#222;transform:translateX(-50%);">正交</span>
<span class="t" style="left:467.45px;top:423.40px;font-size:6.1px;color:#222;transform:translateX(-50%);">极轴</span>
<span class="t" style="left:492.5px;top:423.40px;font-size:6.1px;color:#222;transform:translateX(-50%);">对象捕捉</span>
<span class="t" style="left:521.9px;top:423.40px;font-size:6.1px;color:#222;transform:translateX(-50%);">对象追踪</span>
<span class="t" style="left:545.0px;top:423.40px;font-size:6.1px;color:#222;transform:translateX(-50%);"><span style="font-size:6.5px">DYN</span></span>
<span class="t" style="left:563.0px;top:423.40px;font-size:6.1px;color:#222;transform:translateX(-50%);">线宽</span>
<span class="t" style="left:583.5px;top:423.40px;font-size:6.1px;color:#222;transform:translateX(-50%);">桥绘通</span>
<div class="b" style="left:0px;top:433px;width:600px;height:13px;background:#2b5baa;"></div>
<span class="t" style="left:5.7px;top:434.60px;font-size:5.55px;color:#fff;">欢迎使用桥绘通-综合设计平台</span>
<span class="t" style="left:487px;top:434.40px;font-size:5.75px;color:#fff;">网址：www.qht.me QQ群：255393538</span>
<svg style="left:591px;top:439px" width="5" height="5" viewBox="0 0 5 5"><path d="M4.5 0.5V4.5H0.5 M2.5 2.5V4.5 M4.5 2.5H2.5" stroke="#c8d6ee" stroke-width="0.7" fill="none"/></svg>
</div></body></html>
